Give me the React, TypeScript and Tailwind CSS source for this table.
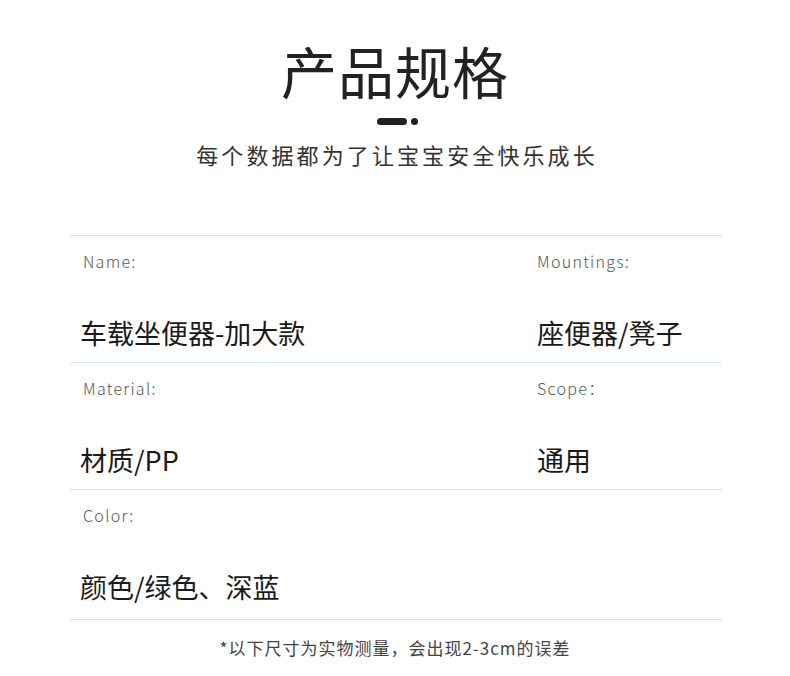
import React from "react";

const font = { fontFamily: '"Noto Sans CJK SC", "Noto Sans", sans-serif' };

function Cell({ label, value, right }: { label: string; value: string; right?: boolean }) {
  return (
    <div className="flex flex-col">
      <div className={`pt-[15px] ${right ? "pl-0" : "pl-[3px]"} text-[16px] leading-[20px] tracking-[1.3px] font-light text-[#555]`}>{label}</div>
      <div className="mt-[44px] text-[27px] leading-[36px] text-[#1a1a1a]">{value}</div>
    </div>
  );
}

export default function App() {
  return (
    <div className="w-[790px] h-[676px] bg-white" style={font}>
      <div className="flex flex-col items-center pt-[36px]">
        <div className="text-[56px] leading-[68px] text-[#222] tracking-[1px]">产品规格</div>
        <div className="flex items-center gap-[4px] mt-[14px] ml-[4px]">
          <div className="w-[30px] h-[7px] rounded-full bg-[#222]" />
          <div className="w-[7px] h-[7px] rounded-full bg-[#222]" />
        </div>
        <div className="mt-[14px] ml-[4px] text-[22px] leading-[30px] tracking-[3.1px] text-[#333]">每个数据都为了让宝宝安全快乐成长</div>
      </div>
      <div className="ml-[70px] w-[652px] mt-[66px] border-t border-[#cfe5f2]">
        <div className="grid grid-cols-[457px_1fr] h-[127px] border-b border-[#cfe5f2] pl-[10px]">
          <Cell label="Name:" value="车载坐便器-加大款" />
          <Cell label="Mountings:" value="座便器/凳子" right />
        </div>
        <div className="grid grid-cols-[457px_1fr] h-[127px] border-b border-[#cfe5f2] pl-[10px]">
          <Cell label="Material:" value="材质/PP" />
          <Cell label="Scope：" value="通用" right />
        </div>
        <div className="grid grid-cols-[457px_1fr] h-[130px] border-b border-[#cfe5f2] pl-[10px]">
          <Cell label="Color:" value="颜色/绿色、深蓝" />
        </div>
      </div>
      <div className="mt-[16px] text-center text-[17px] leading-[24px] tracking-[1px] text-[#444]">*以下尺寸为实物测量，会出现2-3cm的误差</div>
    </div>
  );
}
